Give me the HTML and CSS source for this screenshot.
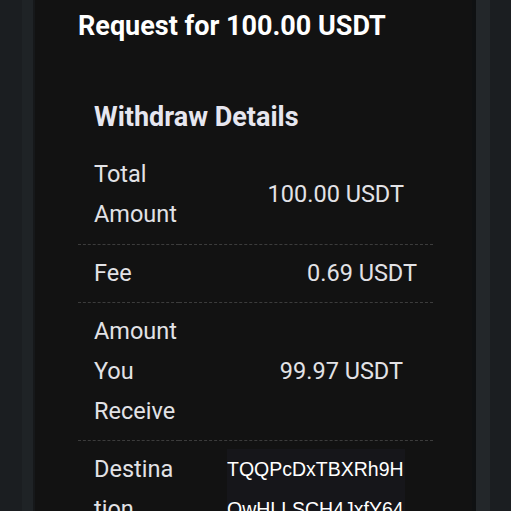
FILE: index.html
```html
<!DOCTYPE html>
<html lang="en">
<head>
    <meta charset="UTF-8">
    <meta name="viewport" content="width=device-width, initial-scale=1">
    <title>Withdraw Request</title>
    <link rel="stylesheet" href="styles.css">
</head>
<body>

    <div class="screen">
        <div class="rail"></div>

        <div class="sheet">
            <h1 class="sheet-title">Request for 100.00 USDT</h1>

            <div class="details">
                <h2 class="details-title">Withdraw Details</h2>

                <table class="details-table">
                    <tbody>
                        <tr>
                            <td class="label">Total Amount</td>
                            <td class="value total">100.00 USDT</td>
                        </tr>
                        <tr>
                            <td class="label">Fee</td>
                            <td class="value fee">0.69 USDT</td>
                        </tr>
                        <tr>
                            <td class="label">Amount You Receive</td>
                            <td class="value receive">99.97 USDT</td>
                        </tr>
                        <tr>
                            <td class="label">Destination</td>
                            <td class="value address"><span>TQQPcDxTBXRh9H QwHLLSCH4JxfY64</span></td>
                        </tr>
                    </tbody>
                </table>
            </div>
        </div>

        <div class="rail rail-right"></div>
    </div>

</body>
</html>
```

FILE: styles.css
```css
body {
    margin: 0;
    background-color: #1b1e21;
    font-family: Roboto, "Noto Sans", sans-serif;
    color: #e2e2e6;
    height: 511px;
    overflow: hidden;
}
.screen {
    display: flex;
    height: 100%;
    padding-left: 22px;
}
.rail {
    width: 11px;
    background-color: #1f2326;
    border-right: 2px solid #16181a;
}
.rail-right {
    width: 14px;
    border-right: none;
    border-left: 4px solid #0f1112;
    background-color: #23272a;
}
.sheet {
    width: 437px;
    background-color: #121212;
    padding: 0 39px 0 43px;
    box-sizing: border-box;
}
.sheet-title {
    margin: 0;
    padding-top: 10px;
    font-size: 27px;
    font-weight: 700;
    line-height: 32px;
    color: #ffffff;
}
.details {
    margin-top: 58px;
}
.details-title {
    margin: 0 0 0 16px;
    font-size: 27px;
    font-weight: 700;
    line-height: 34px;
    color: #e6e6ef;
}
.details-table {
    width: 100%;
    margin-top: 20px;
    border-collapse: collapse;
    table-layout: fixed;
}
.details-table td {
    padding: 0 0 10px;
    border-bottom: 1px dashed #3c3c3c;
    font-size: 23.5px;
    line-height: 40px;
    vertical-align: middle;
}
.details-table tr + tr td {
    padding-top: 8px;
    padding-bottom: 9px;
}
.label {
    width: 85px;
    padding-left: 16px !important;
    overflow-wrap: anywhere;
}
.value {
    text-align: right;
}
.total {
    padding-right: 29px !important;
}
.fee {
    padding-right: 16px !important;
}
.receive {
    padding-right: 30px !important;
}
.address {
    vertical-align: top !important;
    padding-right: 28px !important;
}
.address span {
    display: inline-block;
    width: 178px;
    text-align: left;
    font-family: "Liberation Sans", Arial, sans-serif;
    font-size: 19.5px;
    line-height: 40px;
    color: #ffffff;
    background-color: #16161a;
}
```
